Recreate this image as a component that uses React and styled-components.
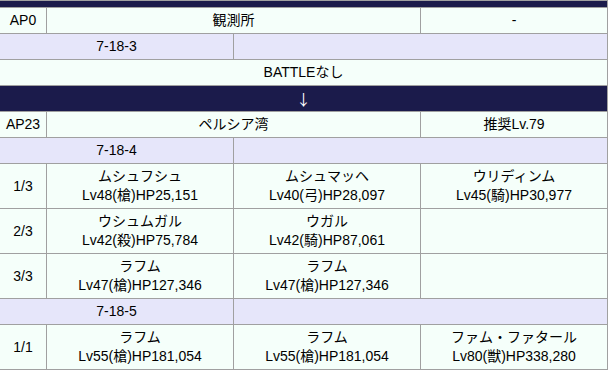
import React from 'react'
import styled, { createGlobalStyle } from 'styled-components'

const GlobalStyle = createGlobalStyle`
    html, body {
        margin: 0;
        padding: 0;
        background: #ffffff;
    }
    body {
        font-family: "Liberation Sans", "Noto Sans CJK JP", sans-serif;
        font-size: 14px;
        color: #000;
    }
`

const tones = {
    mint: '#f5fffa',
    lav: '#e6e6fa',
    dark: '#1b1b4b',
}

const Sheet = styled.div`
    display: grid;
    grid-template-columns: 46px 186px 186px 186px;
    gap: 1px;
    padding: 1px;
    width: 607px;
    margin-left: -1px;
    background: #a0a0a0;
`

const Cell = styled.div`
    grid-column: span ${p => p.$span || 1};
    background: ${p => tones[p.$tone || 'mint']};
    color: ${p => (p.$tone === 'dark' ? '#fff' : '#000')};
    padding: 3px;
    line-height: 19px;
    min-height: 19px;
    display: flex;
    flex-direction: column;
    align-items: center;
    justify-content: center;
    text-align: center;
    white-space: nowrap;
`

const Cap = styled.div`
    grid-column: span 4;
    height: 6px;
    background: ${tones.dark};
`

const Line = styled.span`
    display: block;
`

const Arrow = styled.span`
    font-family: "Noto Sans CJK JP", sans-serif;
    font-size: 15px;
    line-height: 19px;
`

const Enemy = ({ name, stat }) => (
    <Cell>
        <Line>{name}</Line>
        <Line>{stat}</Line>
    </Cell>
)

const QuestHead = ({ ap, place, note }) => (
    <>
        <Cell>{ap}</Cell>
        <Cell $span={2}>{place}</Cell>
        <Cell>{note}</Cell>
    </>
)

const StageRow = ({ id }) => (
    <>
        <Cell $tone='lav' $span={2}>{id}</Cell>
        <Cell $tone='lav' $span={2} />
    </>
)

const WaveRow = ({ wave, enemies }) => (
    <>
        <Cell>{wave}</Cell>
        {[0, 1, 2].map(i =>
            enemies[i]
                ? <Enemy key={i} name={enemies[i][0]} stat={enemies[i][1]} />
                : <Cell key={i} />
        )}
    </>
)

const App = () => {
    return (
        <>
            <GlobalStyle />
            <Sheet>
                <Cap />
                <QuestHead ap='AP0' place='観測所' note='-' />
                <StageRow id='7-18-3' />
                <Cell $span={4}>BATTLEなし</Cell>
                <Cell $tone='dark' $span={4}><Arrow>↓</Arrow></Cell>
                <QuestHead ap='AP23' place='ペルシア湾' note='推奨Lv.79' />
                <StageRow id='7-18-4' />
                <WaveRow wave='1/3' enemies={[
                    ['ムシュフシュ', 'Lv48(槍)HP25,151'],
                    ['ムシュマッヘ', 'Lv40(弓)HP28,097'],
                    ['ウリディンム', 'Lv45(騎)HP30,977'],
                ]} />
                <WaveRow wave='2/3' enemies={[
                    ['ウシュムガル', 'Lv42(殺)HP75,784'],
                    ['ウガル', 'Lv42(騎)HP87,061'],
                ]} />
                <WaveRow wave='3/3' enemies={[
                    ['ラフム', 'Lv47(槍)HP127,346'],
                    ['ラフム', 'Lv47(槍)HP127,346'],
                ]} />
                <StageRow id='7-18-5' />
                <WaveRow wave='1/1' enemies={[
                    ['ラフム', 'Lv55(槍)HP181,054'],
                    ['ラフム', 'Lv55(槍)HP181,054'],
                    ['ファム・ファタール', 'Lv80(獣)HP338,280'],
                ]} />
            </Sheet>
        </>
    )
}

export default App
